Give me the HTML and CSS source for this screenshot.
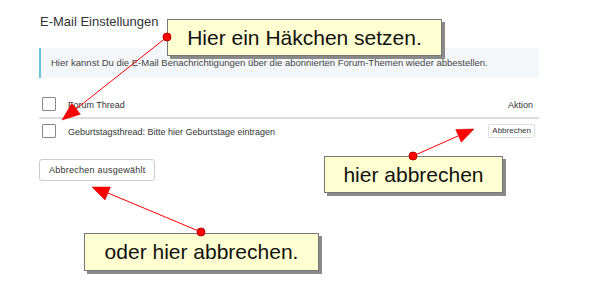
FILE: index.html
```html
<!DOCTYPE html>
<html lang="de">
<head>
<meta charset="UTF-8" />
<meta name="viewport" content="width=device-width, initial-scale=1" />
<title>E-Mail Einstellungen</title>
<link rel="stylesheet" href="styles.css">
</head>

<body>

<div class="page">
  <h2 class="title">E-Mail Einstellungen</h2>

  <div class="info">Hier kannst Du die E-Mail Benachrichtigungen über die abonnierten Forum-Themen wieder abbestellen.</div>

  <div class="threads">
    <div class="row head">
      <span class="check"></span>
      <span class="row-title">Forum Thread</span>
      <span class="row-action">Aktion</span>
    </div>
    <div class="row">
      <span class="check"></span>
      <span class="row-title">Geburtstagsthread: Bitte hier Geburtstage eintragen</span>
      <button class="btn-small">Abbrechen</button>
    </div>
  </div>

  <button class="btn">Abbrechen ausgewählt</button>
</div>

<!-- annotations -->
<div class="callout c1">Hier ein Häkchen setzen.</div>
<div class="callout c2">hier abbrechen</div>
<div class="callout c3">oder hier abbrechen.</div>

<svg class="arrows" width="611" height="281" viewBox="0 0 611 281">
  <line x1="167" y1="37" x2="76" y2="109" />
  <polygon points="62,120 80.4,114.3 71.8,103.3" />
  <circle cx="167" cy="37" r="4" />

  <line x1="413" y1="156" x2="458" y2="136" />
  <polygon points="474,129 461.3,142.3 455.7,129.5" />
  <circle cx="413" cy="156" r="4" />

  <line x1="201" y1="232" x2="108" y2="193" />
  <polygon points="92,187 110.4,187 105,200" />
  <circle cx="201" cy="232" r="4" />
</svg>

</body>
</html>
```

FILE: styles.css
```css
body {
  font-family: "Liberation Sans", Arial, sans-serif;
  background: #fff;
  margin: 0;
  color: #333;
}
.page {
  width: 500px;
  padding: 14px 0 0 39px;
}
.title {
  font-size: 13px;
  font-weight: normal;
  line-height: 16px;
  margin: 0 0 18px 1px;
  color: #333;
}
.info {
  height: 30px;
  line-height: 30px;
  background: #f4f7fa;
  border-left: 2px solid #6cc3e0;
  padding-left: 10px;
  font-size: 9.5px;
  color: #444;
}
.threads {
  margin-top: 10px;
}
.row {
  display: flex;
  align-items: center;
  gap: 12px;
  padding: 0 4px 0 3px;
  height: 23px;
  font-size: 9px;
}
.row.head {
  height: 26px;
  padding-top: 3px;
  border-bottom: 2px solid #ddd;
}
.row-title,
.row-action {
  padding-top: 2px;
}
.check {
  width: 12px;
  height: 12px;
  border: 1px solid #888;
  border-radius: 1px;
  background: #fff;
}
.row-title {
  flex: 1;
}
.row-action {
  padding-right: 2px;
}
.btn-small {
  font-family: inherit;
  font-size: 8px;
  color: #333;
  background: #fff;
  border: 1px solid #ddd;
  border-radius: 2px;
  padding: 0 3px;
  height: 14px;
}
.btn {
  margin-top: 17px;
  font-family: inherit;
  font-size: 9px;
  letter-spacing: 0.25px;
  color: #333;
  background: #fff;
  border: 1px solid #ccc;
  border-radius: 3px;
  height: 22px;
  padding: 0 8px 0 9px;
}
.callout {
  position: absolute;
  display: flex;
  align-items: center;
  justify-content: center;
  background: #ffffd2;
  border: 1px solid #777;
  box-shadow: 3px 3px 0 #8a8a8a;
  font-size: 21px;
  color: #111;
  box-sizing: border-box;
}
.c1 {
  left: 167px;
  top: 19px;
  width: 275px;
  height: 37px;
}
.c2 {
  left: 324px;
  top: 156px;
  width: 179px;
  height: 37px;
}
.c3 {
  left: 84px;
  top: 233px;
  width: 235px;
  height: 38px;
}
.arrows {
  position: absolute;
  left: 0;
  top: 0;
  pointer-events: none;
}
.arrows line {
  stroke: #f00;
  stroke-width: 1;
}
.arrows polygon {
  fill: #f00;
  stroke: #c00;
  stroke-width: 0.5;
}
.arrows circle {
  fill: #f00;
  stroke: #b00;
  stroke-width: 1;
}
```
